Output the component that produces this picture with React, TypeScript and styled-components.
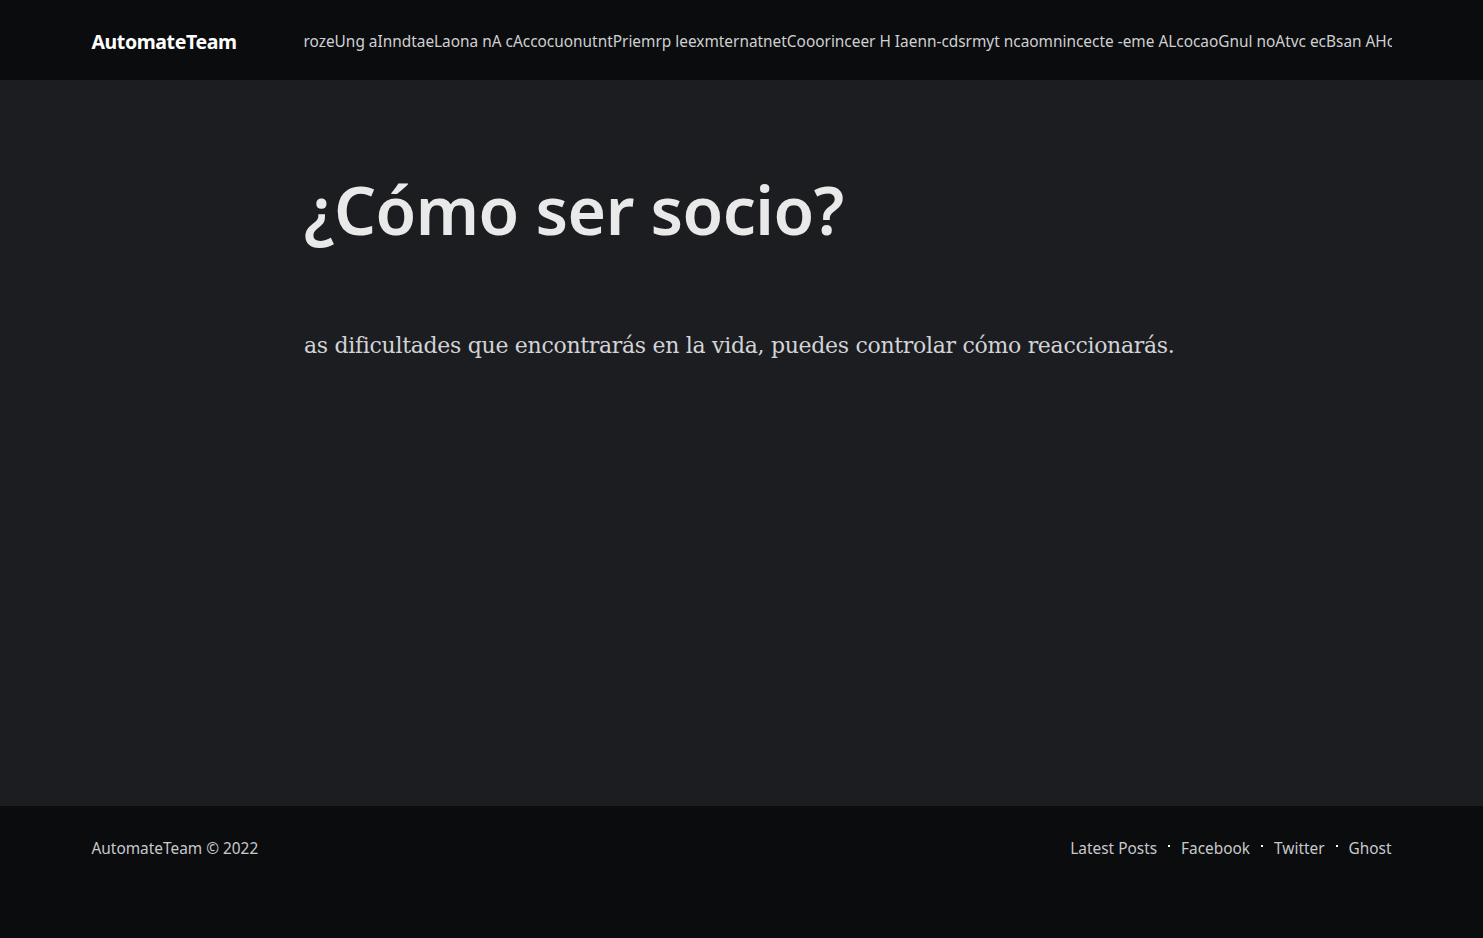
import React from "react";
import styled, { createGlobalStyle } from "styled-components";

const Global = createGlobalStyle`
  html, body { margin: 0; padding: 0; background: #0b0c0e; }
  body { font-family: "Noto Sans", "Open Sans", sans-serif; -webkit-font-smoothing: antialiased; }
  * { box-sizing: border-box; }
`;

const Page = styled.div`
  display: flex;
  flex-direction: column;
  min-height: 938px;
  background: #1c1d21;
`;

const Header = styled.header`
  height: 80px;
  background: #0b0c0e;
  display: flex;
  align-items: center;
`;

const Inner = styled.div`
  width: 1300px;
  margin: 0 auto;
  display: flex;
  align-items: center;
`;

const Logo = styled.a`
  flex: 0 0 212px;
  color: #ffffff;
  font-family: "Noto Sans", sans-serif;
  font-weight: 700;
  font-size: 19.5px;
  letter-spacing: -0.4px;
  text-decoration: none;
  margin-top: 2px;
`;

const Nav = styled.nav`
  flex: 1;
  overflow: hidden;
  white-space: nowrap;
  color: #d0d0d2;
  font-size: 15.4px;
  margin-top: 2px;
`;

const Main = styled.main`
  flex: 1;
  display: flex;
  justify-content: center;
  padding-top: 92px;
`;

const Article = styled.article`
  width: 875px;
`;

const Title = styled.h1`
  margin: 0;
  font-family: "Noto Sans", sans-serif;
  font-weight: 600;
  font-size: 66px;
  line-height: 1.15;
  letter-spacing: -0.5px;
  color: #e9e9ea;
`;

const Body = styled.p`
  margin: 80px 0 0;
  font-family: "DejaVu Serif", Georgia, serif;
  font-size: 22px;
  line-height: 1.6;
  color: #d2d3d6;
  letter-spacing: -0.3px;
`;

const Footer = styled.footer`
  height: 132px;
  background: #0b0c0e;
  padding-top: 32px;
`;

const FootInner = styled(Inner)`
  justify-content: space-between;
  font-size: 15.4px;
  color: #c8c9cc;
`;

const FootNav = styled.nav`
  display: flex;
  align-items: center;
`;

const FootLink = styled.a`
  color: #c8c9cc;
  text-decoration: none;
  display: flex;
  align-items: center;
  & + &::before {
    content: "";
    width: 2px;
    height: 2px;
    background: #ffffff;
    margin: 0 11px 6px 11px;
    display: inline-block;
  }
`;

export default function App() {
  return (
    <>
      <Global />
      <Page>
        <Header>
          <Inner>
            <Logo href="#">AutomateTeam</Logo>
            <Nav>
              rozeUng aInndtaeLaona nA cAccocuonutntPriemrp leexmternatnetCooorinceer H Iaenn-cdsrmyt ncaomnincecte -eme ALcocaoGnul noAtvc ecBsan AHca
            </Nav>
          </Inner>
        </Header>
        <Main>
          <Article>
            <Title>¿Cómo ser socio?</Title>
            <Body>
              as dificultades que encontrarás en la vida, puedes controlar cómo reaccionarás.
            </Body>
          </Article>
        </Main>
        <Footer>
          <FootInner>
            <span>AutomateTeam © 2022</span>
            <FootNav>
              <FootLink href="#">Latest Posts</FootLink>
              <FootLink href="#">Facebook</FootLink>
              <FootLink href="#">Twitter</FootLink>
              <FootLink href="#">Ghost</FootLink>
            </FootNav>
          </FootInner>
        </Footer>
      </Page>
    </>
  );
}
